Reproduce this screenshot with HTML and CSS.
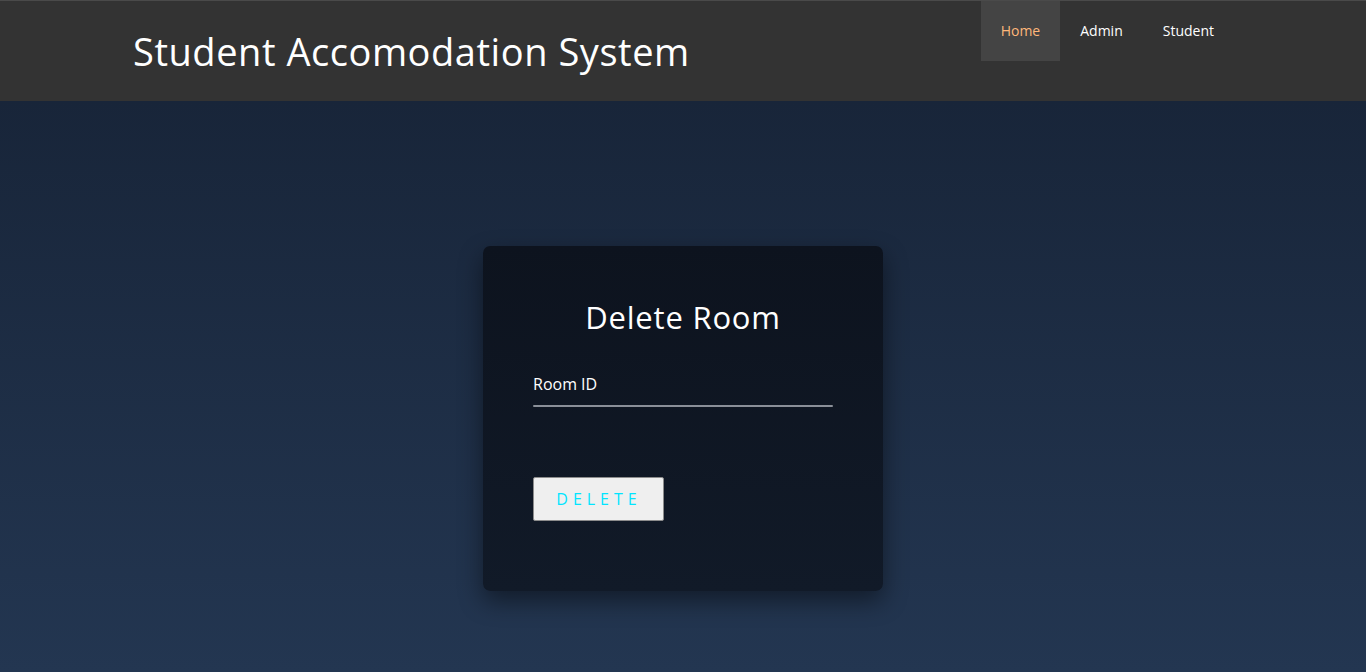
FILE: index.html
```html
<!DOCTYPE html>
<html>
<head>
<meta charset="utf-8">
<link rel="stylesheet" href="styles.css">
</head>
<body>
<header class="topbar">
  <h1 class="brand">Student Accomodation System</h1>
  <nav class="nav">
    <a class="nav-item active" href="#">Home</a>
    <a class="nav-item" href="#">Admin</a>
    <a class="nav-item" href="#">Student</a>
  </nav>
</header>
<main class="main">
  <form class="card">
    <h2 class="card-title">Delete Room</h2>
    <label class="field">
      <span class="field-label">Room ID</span>
      <span class="field-line"></span>
    </label>
    <button type="button" class="btn">DELETE</button>
  </form>
</main>
</body>
</html>
```
FILE: styles.css
```css
html, body {
  margin: 0;
  padding: 0;
  height: 100%;
}
body {
  font-family: "Open Sans", "DejaVu Sans", sans-serif;
  background: linear-gradient(to bottom, #162235 0%, #233651 100%);
  min-height: 672px;
  display: flex;
  flex-direction: column;
}
.topbar {
  height: 100px;
  background: #333333;
  border-top: 1px solid #4a4a4a;
  display: flex;
  align-items: flex-start;
  padding-left: 133px;
  padding-right: 132px;
  box-sizing: content-box;
}
.brand {
  margin: 0;
  margin-top: 26px;
  font-family: "Open Sans", sans-serif;
  font-weight: 400;
  font-size: 38px;
  line-height: 48px;
  color: #ffffff;
  letter-spacing: 0.55px;
  flex: 1;
}
.nav {
  display: flex;
}
.nav-item {
  display: block;
  height: 60px;
  line-height: 60px;
  padding: 0 20px;
  font-family: "Open Sans", sans-serif;
  font-weight: 400;
  font-size: 14px;
  color: #ffffff;
  text-decoration: none;
}
.nav-item.active {
  background: #444444;
  color: #ffb77a;
}
.main {
  flex: 1;
  display: flex;
  justify-content: center;
  padding-top: 145px;
}
.card {
  width: 400px;
  height: 345px;
  box-sizing: border-box;
  padding: 50px 50px 0 50px;
  border-radius: 7px;
  background: linear-gradient(to bottom, #0d131e, #111a28);
  box-shadow: 0 10px 25px rgba(0, 0, 0, 0.45);
  display: flex;
  flex-direction: column;
}
.card-title {
  margin: 0;
  text-align: center;
  font-family: "Open Sans", sans-serif;
  font-weight: 400;
  font-size: 31px;
  line-height: 42px;
  letter-spacing: 0.8px;
  color: #ffffff;
}
.field {
  display: flex;
  flex-direction: column;
  margin-top: 36px;
}
.field-label {
  font-family: "Open Sans", sans-serif;
  font-size: 16px;
  line-height: 21px;
  color: #ffffff;
}
.field-line {
  display: block;
  margin-top: 10px;
  height: 2px;
  background: #8a8f98;
  border-radius: 1px;
}
.btn {
  margin-top: 70px;
  width: 131px;
  height: 44px;
  background: #efefef;
  border: 1px solid #8c8c8c;
  border-radius: 2px;
  font-family: "Open Sans", sans-serif;
  font-weight: 400;
  font-size: 16px;
  letter-spacing: 5px;
  color: #00e5ff;
  padding: 0 0 0 1px;
  cursor: pointer;
}
```
